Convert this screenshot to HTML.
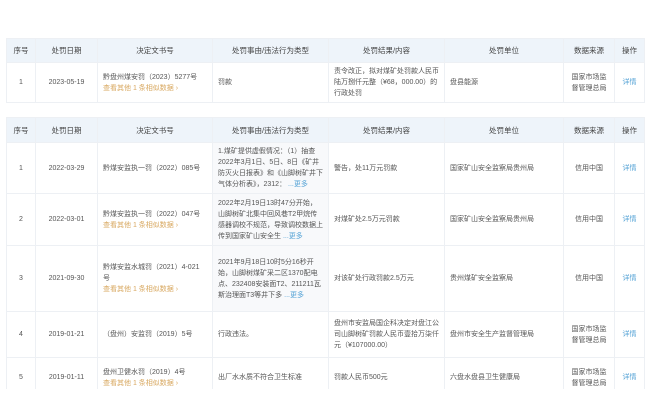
<!DOCTYPE html>
<html><head><meta charset="utf-8"><style>
*{margin:0;padding:0;box-sizing:border-box}
body{width:650px;height:411px;background:#fff;font-family:"Liberation Sans","Noto Sans CJK SC",sans-serif;color:#555;font-size:7px;overflow:hidden;position:relative}
table{position:absolute;left:6px;width:638px;border-collapse:collapse;table-layout:fixed}
td,th{border:1px solid #edf0f4;vertical-align:middle;line-height:11px;font-weight:normal;padding:0 5px;text-align:left}
th{background:#eef4fa;color:#444;text-align:center;font-size:7.5px}
.c{text-align:center}
.l{color:#d8a860}
.d{color:#55a3d6;text-align:center}
.g{background:#f8f9fb}
.m{color:#55a3d6}
.cover{position:absolute;left:0;top:389px;width:650px;height:30px;background:#fff}
</style></head><body>
<table style="top:38px">
<colgroup><col style="width:29px"><col style="width:62px"><col style="width:115px"><col style="width:116px"><col style="width:116px"><col style="width:119px"><col style="width:51px"><col style="width:30px"></colgroup>
<tr style="height:24px"><th>序号</th><th>处罚日期</th><th>决定文书号</th><th>处罚事由/违法行为类型</th><th>处罚结果/内容</th><th>处罚单位</th><th>数据来源</th><th>操作</th></tr>
<tr style="height:40px"><td class="c">1</td><td class="c">2023-05-19</td><td>黔盘州煤安罚（2023）5277号<br><span class="l">查看其他 1 条相似数据 ›</span></td><td>罚款</td><td>责令改正，拟对煤矿处罚款人民币陆万捌仟元整（¥68，000.00）的行政处罚</td><td>盘县能源</td><td class="c">国家市场监督管理总局</td><td class="d">详情</td></tr>
</table>
<table style="top:117px">
<colgroup><col style="width:29px"><col style="width:62px"><col style="width:115px"><col style="width:116px"><col style="width:116px"><col style="width:119px"><col style="width:51px"><col style="width:30px"></colgroup>
<tr style="height:25px"><th>序号</th><th>处罚日期</th><th>决定文书号</th><th>处罚事由/违法行为类型</th><th>处罚结果/内容</th><th>处罚单位</th><th>数据来源</th><th>操作</th></tr>
<tr style="height:51px"><td class="c">1</td><td class="c">2022-03-29</td><td>黔煤安监执一罚（2022）085号</td><td class="g">1.煤矿提供虚假情况：（1）抽查2022年3月1日、5日、8日《矿井防灭火日报表》和《山脚树矿井下气体分析表》，2312： <span class="m">...更多</span></td><td>警告，处11万元罚款</td><td>国家矿山安全监察局贵州局</td><td class="c">信用中国</td><td class="d">详情</td></tr>
<tr style="height:52px"><td class="c">2</td><td class="c">2022-03-01</td><td>黔煤安监执一罚（2022）047号<br><span class="l">查看其他 1 条相似数据 ›</span></td><td class="g">2022年2月19日13时47分开始，山脚树矿北集中回风巷T2甲烷传感器调校不规范，导致调校数据上传到国家矿山安全生 <span class="m">...更多</span></td><td>对煤矿处2.5万元罚款</td><td>国家矿山安全监察局贵州局</td><td class="c">信用中国</td><td class="d">详情</td></tr>
<tr style="height:66px"><td class="c">3</td><td class="c">2021-09-30</td><td>黔煤安监水城罚（2021）4-021<br>号<br><span class="l">查看其他 1 条相似数据 ›</span></td><td class="g">2021年9月18日10时5分16秒开始，山脚树煤矿采二区1370配电点、232408安装面T2、211211瓦斯治理面T3等井下多 <span class="m">...更多</span></td><td>对该矿处行政罚款2.5万元</td><td>贵州煤矿安全监察局</td><td class="c">信用中国</td><td class="d">详情</td></tr>
<tr style="height:46px"><td class="c">4</td><td class="c">2019-01-21</td><td>（盘州）安监罚（2019）5号</td><td>行政违法。</td><td>盘州市安监局国企科决定对盘江公司山脚树矿罚款人民币壹拾万柒仟元（¥107000.00）</td><td>盘州市安全生产监督管理局</td><td class="c">国家市场监督管理总局</td><td class="d">详情</td></tr>
<tr style="height:40px"><td class="c">5</td><td class="c">2019-01-11</td><td>盘州卫健水罚（2019）4号<br><span class="l">查看其他 1 条相似数据 ›</span></td><td>出厂水水质不符合卫生标准</td><td>罚款人民币500元</td><td>六盘水盘县卫生健康局</td><td class="c">国家市场监督管理总局</td><td class="d">详情</td></tr>
</table>
<div class="cover"></div>
</body></html>
